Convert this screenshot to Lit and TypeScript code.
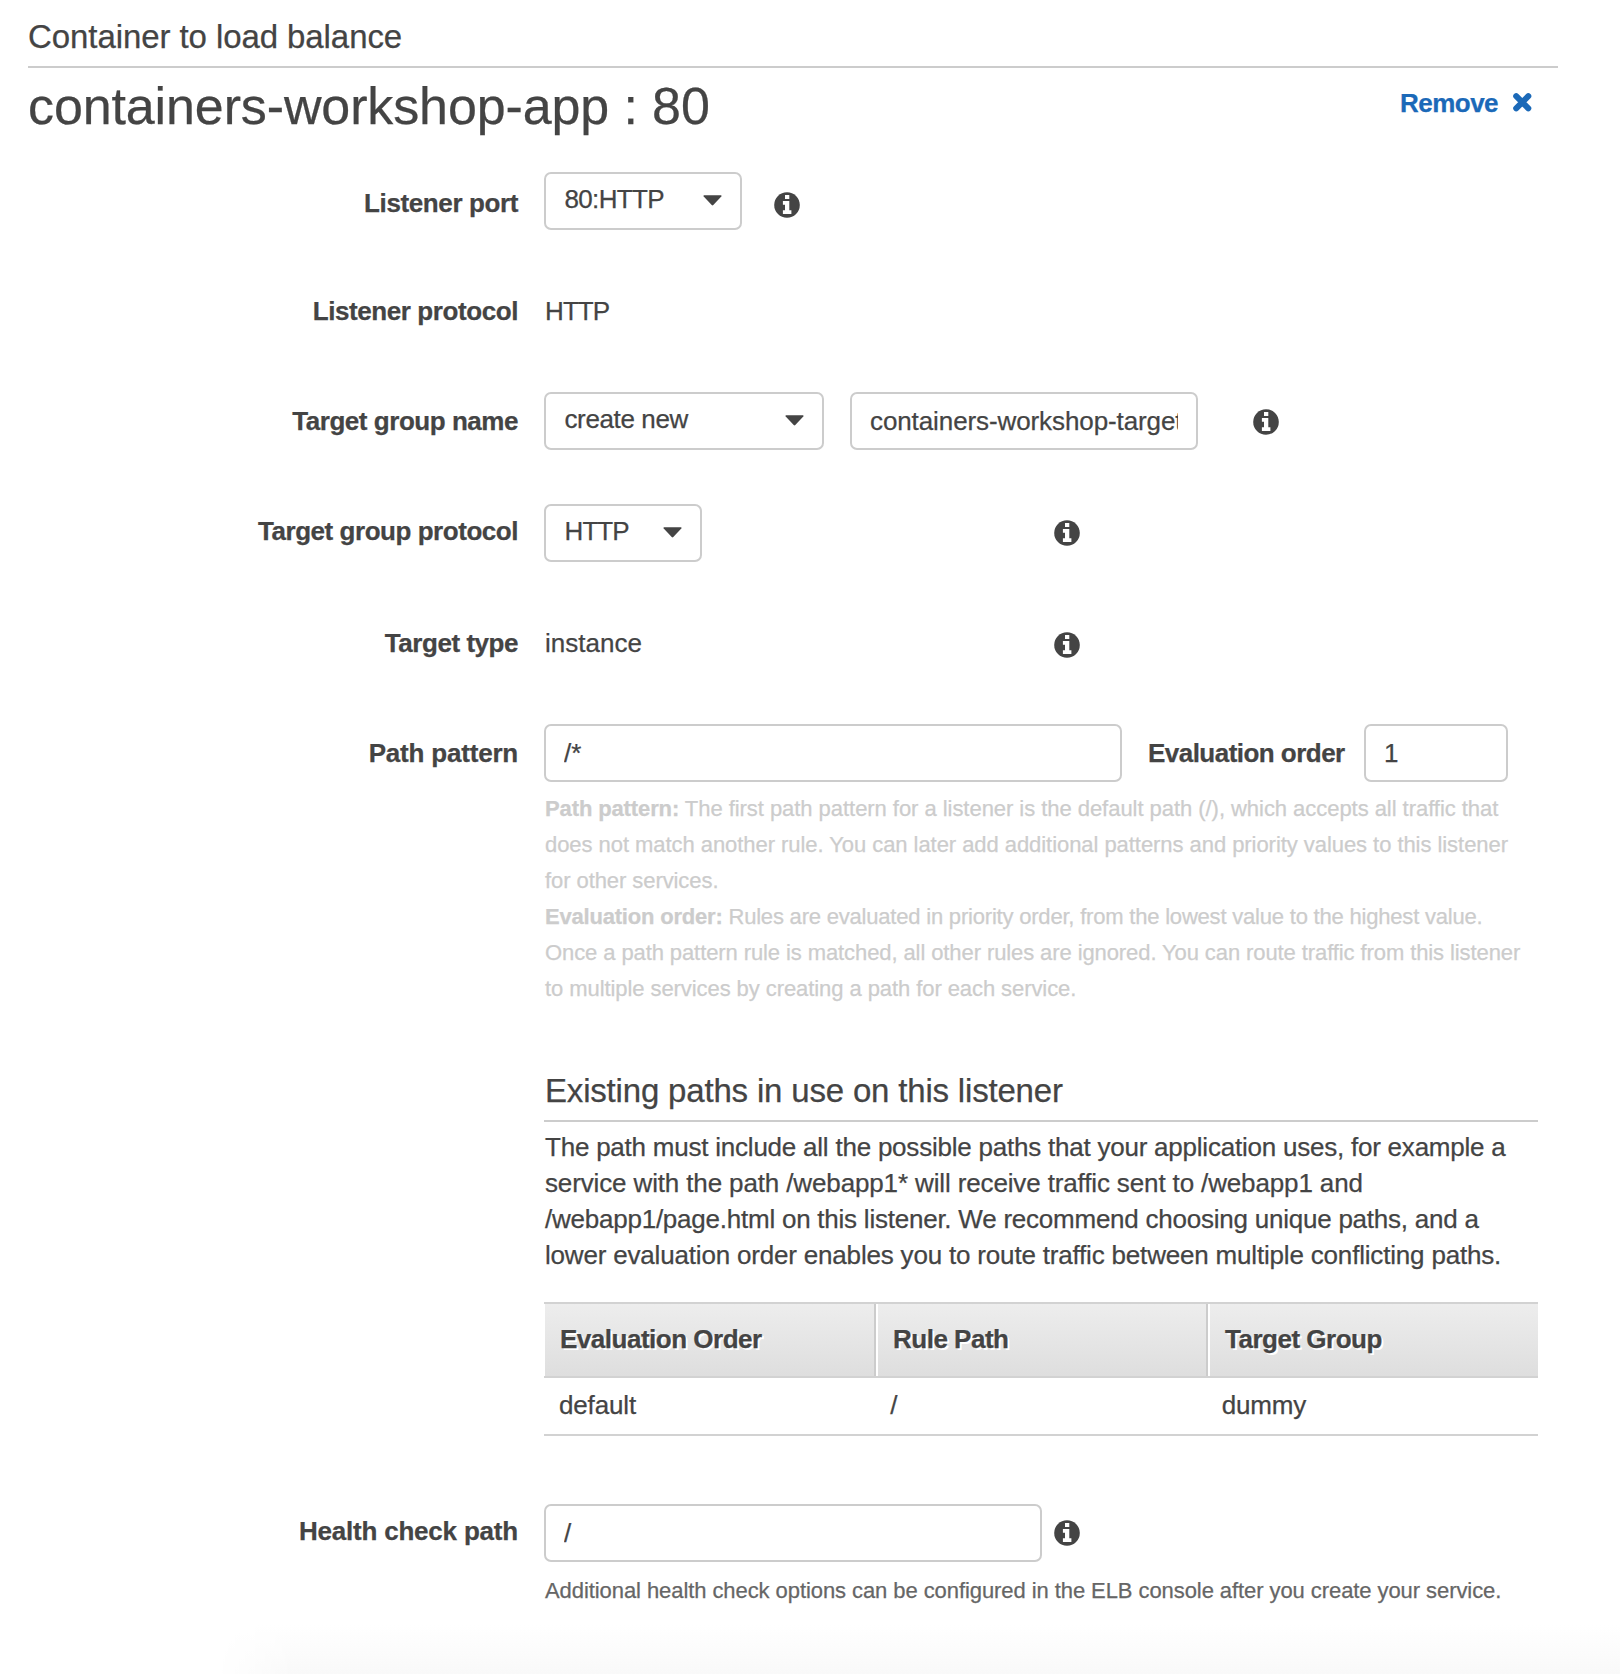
import { LitElement, html, css } from "lit";
import { customElement, property } from "lit/decorators.js";

@customElement("info-icon")
class InfoIcon extends LitElement {
  static styles = css`
    :host { display: block; width: 26px; height: 26px; flex: none; }
    svg { display: block; }
  `;
  render() {
    return html`<svg width="26" height="26" viewBox="0 0 26 26">
      <circle cx="13" cy="13" r="12.8" fill="#444"></circle>
      <path fill="#fff" d="M11 3h4.300v4H11zM8.900 9h6.400v9.300h2.100V22H8.900v-3.700H11v-5.600H8.900z"></path>
    </svg>`;
  }
}

@customElement("select-box")
class SelectBox extends LitElement {
  @property() value = "";
  static styles = css`
    :host {
      display: flex; box-sizing: border-box; height: 58px; flex: none;
      border: 2px solid #ccc; border-radius: 7px; background: #fff;
      padding: 7px 18px 0 18.5px; justify-content: space-between; align-items: flex-start;
      line-height: 36px; white-space: nowrap;
    }
    svg { display: block; margin-top: 14px; }
  `;
  render() {
    return html`<span>${this.value}</span>
      <svg width="19" height="11" viewBox="0 0 19 11">
        <path d="M1 .3h17q1 .3.3 1.2L10.300 10q-.8.8-1.600 0L.7 1.500Q0 .6 1 .3z" fill="#444"></path>
      </svg>`;
  }
}

@customElement("text-box")
class TextBox extends LitElement {
  @property() value = "";
  static styles = css`
    :host {
      display: block; box-sizing: border-box; height: 58px; flex: none;
      border: 2px solid #ccc; border-radius: 7px; background: #fff;
      padding: 9px 18px 0; line-height: 36px;
    }
    .value { overflow: hidden; white-space: nowrap; }
  `;
  render() {
    return html`<div class="value">${this.value}</div>`;
  }
}

@customElement("app-root")
class AppRoot extends LitElement {
  static styles = css`
    :host {
      display: flex; flex-direction: column; box-sizing: border-box;
      width: 1620px; height: 1674px; overflow: hidden;
      background: #fff; color: #444;
      font: 26px/36px "Liberation Sans", Arial, sans-serif;
      -webkit-text-stroke: .25px currentColor;
    }
    * { box-sizing: border-box; }
    h1, h2, h3, p { margin: 0; font-weight: 400; }
    .section-title {
      margin: 0 62px 0 28px; height: 68px; padding-top: 17px;
      border-bottom: 2px solid #ccc; font-size: 33px; line-height: 40px; letter-spacing: -.08px;
    }
    .title-row {
      display: flex; justify-content: space-between; align-items: flex-start;
      height: 104px; padding: 9px 87px 0 28px;
    }
    .name { font-size: 52px; line-height: 58px; letter-spacing: -.12px; }
    .remove {
      display: flex; align-items: flex-start; gap: 14px; padding-top: 8px;
      color: #1b69b8; font-weight: 700; letter-spacing: -.54px;
    }
    .remove svg { display: block; margin-top: 7px; }
    .form {
      display: grid; grid-template-columns: 518px 994px; column-gap: 26px;
      grid-template-rows: 112px 108px 112px 112px 108px 780px auto;
    }
    .label { text-align: right; font-weight: 700; padding-top: 9px; letter-spacing: -.46px; white-space: nowrap; }
    .label.d1 { padding-top: 13px; letter-spacing: -.38px; }
    .label.d2 { padding-top: 11px; }
    .label.wide { letter-spacing: -.2px; }
    .label.mid { letter-spacing: -.42px; }
    .controls { display: flex; align-items: flex-start; }
    .controls info-icon { margin-top: 16px; }
    .controls .i1 { margin: 20px 0 0 32px; }
    .controls .i3 { margin: 17px 0 0 55px; }
    .slot { width: 510px; flex: none; display: flex; }
    .plain { padding: 9px 0 0 1px; }
    .tight { letter-spacing: -.9px; }
    .port { width: 198px; letter-spacing: -.65px; }
    .group { width: 280px; letter-spacing: -.38px; margin-right: 26px; }
    .group-name { width: 348px; letter-spacing: -.1px; }
    .protocol { width: 158px; letter-spacing: -.9px; }
    .pattern { width: 578px; }
    .order { width: 144px; }
    .order-label { width: 242px; padding: 11px 0 0 26px; font-weight: 700; letter-spacing: -.53px; }
    .health { width: 498px; margin-right: 12px; }
    .help { font-size: 22px; color: #ccc; padding: 9px 0 0 1px; letter-spacing: -.075px; }
    .help.dark { color: #666; padding-top: 11px; }
    .help b { letter-spacing: -.12px; }
    .g1 { letter-spacing: -.045px; }
    .g2 { letter-spacing: -.055px; }
    .g4, .help .g4 b { letter-spacing: -.2px; }
    .g5 { letter-spacing: -.095px; }
    .line { display: block; white-space: nowrap; }
    .sub-title {
      margin-top: 63px; height: 52px; padding: 1px 0 0 1px; border-bottom: 2px solid #ccc;
      font-size: 33px; line-height: 40px; letter-spacing: -.18px;
    }
    .text { padding: 7px 0 0 1px; }
    .s1 { letter-spacing: -.225px; }
    .s2 { letter-spacing: -.135px; }
    .s3 { letter-spacing: -.235px; }
    .s4 { letter-spacing: -.185px; }
    .table { margin-top: 29px; border-top: 2px solid #d2d2d2; }
    .head {
      display: grid; grid-template-columns: 332px 332px 330px; height: 74px;
      border-bottom: 2px solid #d2d2d2; background: linear-gradient(#ededed, #dedede);
      font-weight: 700; letter-spacing: -.49px; text-shadow: 2px 2px 0 #fff;
    }
    .head div { padding: 17px 0 0 15px; border-right: 2px solid #ccc; }
    .head div:first-child { border-left: 1px solid #fff; }
    .head div + div { border-left: 2px solid #fff; }
    .head div:last-child { border-right: 0; }
    .row {
      display: grid; grid-template-columns: repeat(3, 1fr); height: 58px;
      border-bottom: 2px solid #d2d2d2; letter-spacing: -.15px;
    }
    .row div { padding: 9px 0 0 15px; }
    .footer-shade {
      flex: 1; min-height: 0; margin: 16px 0 0 215px;
      background: linear-gradient(#fff, #f9f9f9);
      -webkit-mask-image: linear-gradient(90deg, transparent, #000 80px);
      mask-image: linear-gradient(90deg, transparent, #000 80px);
    }
  `;
  render() {
    return html`
      <h2 class="section-title">Container to load balance</h2>
      <div class="title-row">
        <h1 class="name">containers-workshop-app : 80</h1>
        <div class="remove">
          <span>Remove</span>
          <svg width="21" height="21" viewBox="0 0 21 21">
            <path d="M4.200 4.200 16.300 16.300M16.300 4.200 4.200 16.300" stroke="#1b69b8" stroke-width="6" stroke-linecap="round"></path>
          </svg>
        </div>
      </div>
      <div class="form">
        <div class="label d1">Listener port</div>
        <div class="controls">
          <select-box class="port" value="80:HTTP"></select-box>
          <info-icon class="i1"></info-icon>
        </div>
        <div class="label mid">Listener protocol</div>
        <div class="controls"><div class="plain tight">HTTP</div></div>
        <div class="label d2">Target group name</div>
        <div class="controls">
          <select-box class="group" value="create new"></select-box>
          <text-box class="group-name" value="containers-workshop-target"></text-box>
          <info-icon class="i3"></info-icon>
        </div>
        <div class="label">Target group protocol</div>
        <div class="controls">
          <div class="slot"><select-box class="protocol" value="HTTP"></select-box></div>
          <info-icon></info-icon>
        </div>
        <div class="label">Target type</div>
        <div class="controls">
          <div class="slot plain">instance</div>
          <info-icon></info-icon>
        </div>
        <div class="label d2 wide">Path pattern</div>
        <div>
          <div class="controls">
            <text-box class="pattern" value="/*"></text-box>
            <div class="order-label">Evaluation order</div>
            <text-box class="order" value="1"></text-box>
          </div>
          <p class="help">
            <span class="line g1"><b>Path pattern:</b> The first path pattern for a listener is the default path (/), which accepts all traffic that</span>
            <span class="line g2">does not match another rule. You can later add additional patterns and priority values to this listener</span>
            <span class="line">for other services.</span>
            <span class="line g4"><b>Evaluation order:</b> Rules are evaluated in priority order, from the lowest value to the highest value.</span>
            <span class="line g5">Once a path pattern rule is matched, all other rules are ignored. You can route traffic from this listener</span>
            <span class="line">to multiple services by creating a path for each service.</span>
          </p>
          <h3 class="sub-title">Existing paths in use on this listener</h3>
          <p class="text">
            <span class="line s1">The path must include all the possible paths that your application uses, for example a</span>
            <span class="line s2">service with the path /webapp1* will receive traffic sent to /webapp1 and</span>
            <span class="line s3">/webapp1/page.html on this listener. We recommend choosing unique paths, and a</span>
            <span class="line s4">lower evaluation order enables you to route traffic between multiple conflicting paths.</span>
          </p>
          <div class="table">
            <div class="head"><div>Evaluation Order</div><div>Rule Path</div><div>Target Group</div></div>
            <div class="row"><div>default</div><div>/</div><div>dummy</div></div>
          </div>
        </div>
        <div class="label wide">Health check path</div>
        <div>
          <div class="controls">
            <text-box class="health" value="/"></text-box>
            <info-icon></info-icon>
          </div>
          <p class="help dark">Additional health check options can be configured in the ELB console after you create your service.</p>
        </div>
      </div>
      <div class="footer-shade"></div>
    `;
  }
}
